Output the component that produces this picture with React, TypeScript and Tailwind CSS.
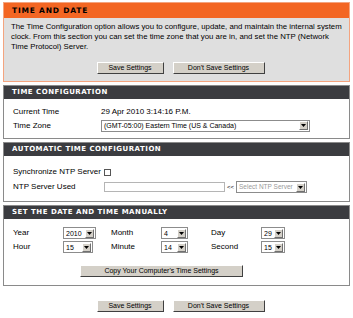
import React from 'react';

const font = { fontFamily: '"Liberation Sans", Arial, sans-serif' };
const headFont = { fontFamily: '"DejaVu Sans", Verdana, sans-serif' };

const Btn: React.FC<{ label: string; w: string }> = ({ label, w }) => (
  <div
    className={`${w} h-[12px] flex items-center justify-center bg-[#d4d0c8] text-[7px] text-black border-t border-l border-t-[#ffffff] border-l-[#ffffff] border-b border-r border-b-[#404040] border-r-[#404040]`}
  >
    {label}
  </div>
);

const Arrow: React.FC = () => (
  <div className="w-[9px] h-[9px] shrink-0 bg-[#d4d0c8] border-t border-l border-t-white border-l-white border-b border-r border-b-[#707070] border-r-[#707070] flex items-center justify-center">
    <svg width="5" height="3" viewBox="0 0 5 3">
      <path d="M0 0h5L2.5 3z" fill="#000" />
    </svg>
  </div>
);

const Select: React.FC<{ value: string; w: string; muted?: boolean }> = ({ value, w, muted }) => (
  <div className={`${w} h-[12px] bg-white border border-[#8c8c8c] flex items-center justify-between pl-[2px] pr-[1px]`}>
    <span className={`leading-none whitespace-nowrap ${muted ? 'text-[6.5px] text-[#9a9a9a]' : 'text-[7px] text-black'}`}>{value}</span>
    <Arrow />
  </div>
);

const Header: React.FC<{ title: string }> = ({ title }) => (
  <div className="h-[13px] bg-[#3b3c40] flex items-center pl-[8px]">
    <span className="text-white font-bold text-[7px] tracking-[0.5px]" style={headFont}>
      {title}
    </span>
  </div>
);

export default function App() {
  return (
    <div className="w-[353px] h-[318px] bg-white px-[3px] pt-[2px] text-[8px] text-black" style={font}>
      <div className="border border-[#f4a47f] bg-[#dfdfdf] h-[80px]">
        <div className="h-[15px] bg-[#f36623] flex items-center pl-[8px]">
          <span className="font-bold text-[7.5px] tracking-[0.8px] text-black" style={headFont}>
            TIME AND DATE
          </span>
        </div>
        <p className="px-[7px] pt-[4px] leading-[10px] text-[7.8px]">
          The Time Configuration option allows you to configure, update, and maintain the internal system clock. From
          this section you can set the time zone that you are in, and set the NTP (Network Time Protocol) Server.
        </p>
        <div className="flex justify-center gap-[9px] mt-[10px] pl-[8px]">
          <Btn label="Save Settings" w="w-[67px]" />
          <Btn label="Don't Save Settings" w="w-[92px]" />
        </div>
      </div>

      <div className="mt-[3px] border border-[#8a8a8a]">
        <Header title="TIME CONFIGURATION" />
        <div className="bg-white pt-[6px] pb-[5px]">
          <div className="flex items-center h-[13px] pl-[9px]">
            <span className="w-[88px]">Current Time</span>
            <span>29 Apr 2010 3:14:16 P.M.</span>
          </div>
          <div className="flex items-center h-[15px] pl-[9px]">
            <span className="w-[88px]">Time Zone</span>
            <Select value="(GMT-05:00) Eastern Time (US & Canada)" w="w-[209px]" />
          </div>
        </div>
      </div>

      <div className="mt-[3px] border border-[#8a8a8a]">
        <Header title="AUTOMATIC TIME CONFIGURATION" />
        <div className="bg-white pt-[9px] pb-[6px]">
          <div className="flex items-center h-[14px] pl-[9px]">
            <span className="w-[91px]">Synchronize NTP Server</span>
            <div className="w-[7px] h-[7px] border border-[#555] bg-white" />
          </div>
          <div className="flex items-center h-[16px] pl-[9px]">
            <span className="w-[91px]">NTP Server Used</span>
            <div className="w-[121px] h-[10px] border border-[#b5b5b5] bg-white" />
            <span className="mx-[2px] text-[6px]">&lt;&lt;</span>
            <Select value="Select NTP Server" w="w-[71px]" muted />
          </div>
        </div>
      </div>

      <div className="mt-[3px] border border-[#8a8a8a]">
        <Header title="SET THE DATE AND TIME MANUALLY" />
        <div className="bg-white pt-[7px] pb-[8px]">
          <div className="flex items-center h-[14px] pl-[9px]">
            <span className="w-[50px]">Year</span>
            <Select value="2010" w="w-[33px]" />
            <span className="w-[65px] pl-[15px]">Month</span>
            <Select value="4" w="w-[27px]" />
            <span className="w-[73px] pl-[23px]">Day</span>
            <Select value="29" w="w-[24px]" />
          </div>
          <div className="flex items-center h-[14px] pl-[9px]">
            <span className="w-[50px]">Hour</span>
            <Select value="15" w="w-[30px]" />
            <span className="w-[68px] pl-[18px]">Minute</span>
            <Select value="14" w="w-[27px]" />
            <span className="w-[73px] pl-[23px]">Second</span>
            <Select value="15" w="w-[24px]" />
          </div>
          <div className="flex justify-center mt-[11px] pr-[30px]">
            <Btn label="Copy Your Computer's Time Settings" w="w-[163px]" />
          </div>
        </div>
      </div>

      <div className="flex justify-center gap-[9px] mt-[14px] pl-[8px]">
        <Btn label="Save Settings" w="w-[67px]" />
        <Btn label="Don't Save Settings" w="w-[92px]" />
      </div>
    </div>
  );
}
